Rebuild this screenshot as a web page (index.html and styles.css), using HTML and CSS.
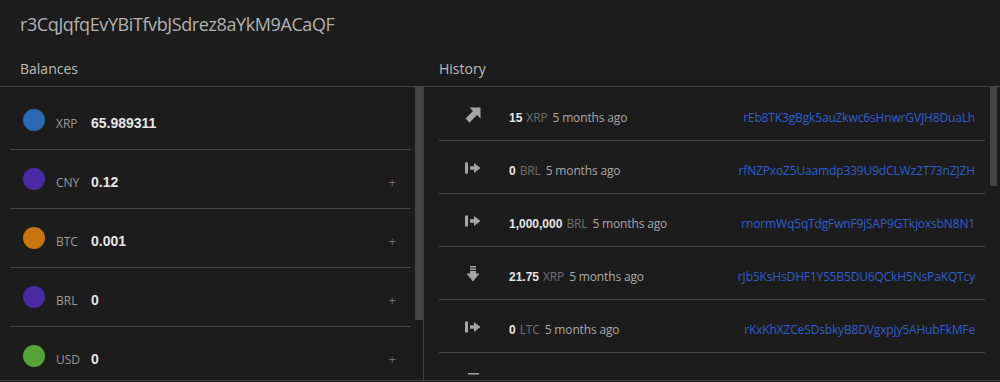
FILE: index.html
```html
<!DOCTYPE html>
<html lang="en">
<head>
  <meta charset="UTF-8" />
  <title>Wallet r3CqJqfqEvYBiTfvbJSdrez8aYkM9ACaQF</title>
  <link rel="stylesheet" href="styles.css">
</head>
<body>

<header class="account">
  <h1>r3CqJqfqEvYBiTfvbJSdrez8aYkM9ACaQF</h1>
</header>

<main class="columns">

  <!-- Balances -->
  <section class="balances">
    <h2 class="panel-title">Balances</h2>
    <div class="panel-body">
      <ul class="balance-list">
        <li class="balance">
          <span class="coin" style="background: #2c68b4"></span>
          <span class="currency">XRP</span>
          <span class="amount">65.989311</span>
        </li>
        <li class="balance">
          <span class="coin" style="background: #4a2aa3"></span>
          <span class="currency">CNY</span>
          <span class="amount">0.12</span>
          <span class="add">+</span>
        </li>
        <li class="balance">
          <span class="coin" style="background: #c6760c"></span>
          <span class="currency">BTC</span>
          <span class="amount">0.001</span>
          <span class="add">+</span>
        </li>
        <li class="balance">
          <span class="coin" style="background: #4a2aa3"></span>
          <span class="currency">BRL</span>
          <span class="amount">0</span>
          <span class="add">+</span>
        </li>
        <li class="balance">
          <span class="coin" style="background: #55a43a"></span>
          <span class="currency">USD</span>
          <span class="amount">0</span>
          <span class="add">+</span>
        </li>
      </ul>
      <div class="scroll-track"><div class="scroll-thumb balances-thumb"></div></div>
    </div>
  </section>

  <!-- History -->
  <section class="history">
    <h2 class="panel-title">History</h2>
    <div class="panel-body">
      <ul class="history-list">
        <li class="tx">
          <svg class="tx-icon" viewBox="0 0 16 16"><path d="M15.5 0.5 V11.5 L12 8 L4.5 15.5 L0.5 11.5 L8 4 L4.5 0.5 Z"/></svg>
          <span class="tx-amount">15</span>
          <span class="tx-currency">XRP</span>
          <span class="tx-time">5 months ago</span>
          <a class="tx-peer" href="#">rEb8TK3gBgk5auZkwc6sHnwrGVJH8DuaLh</a>
        </li>
        <li class="tx">
          <svg class="tx-icon" viewBox="0 0 16 16"><rect x="0" y="2.5" width="3" height="11"/><path d="M5 6.3 H9 V3 L15.5 8 L9 13 V9.7 H5 Z"/></svg>
          <span class="tx-amount">0</span>
          <span class="tx-currency">BRL</span>
          <span class="tx-time">5 months ago</span>
          <a class="tx-peer" href="#">rfNZPxoZ5Uaamdp339U9dCLWz2T73nZJZH</a>
        </li>
        <li class="tx">
          <svg class="tx-icon" viewBox="0 0 16 16"><rect x="0" y="2.5" width="3" height="11"/><path d="M5 6.3 H9 V3 L15.5 8 L9 13 V9.7 H5 Z"/></svg>
          <span class="tx-amount">1,000,000</span>
          <span class="tx-currency">BRL</span>
          <span class="tx-time">5 months ago</span>
          <a class="tx-peer" href="#">rnormWq5qTdgFwnF9jSAP9GTkjoxsbN8N1</a>
        </li>
        <li class="tx">
          <svg class="tx-icon" viewBox="0 0 16 16"><path d="M5 0 H11 V1.6 H5 Z M5 2.5 H11 V4.1 H5 Z M5 5 H11 V7.5 H14.5 L8 15.5 L1.5 7.5 H5 Z"/></svg>
          <span class="tx-amount">21.75</span>
          <span class="tx-currency">XRP</span>
          <span class="tx-time">5 months ago</span>
          <a class="tx-peer" href="#">rJb5KsHsDHF1YS5B5DU6QCkH5NsPaKQTcy</a>
        </li>
        <li class="tx">
          <svg class="tx-icon" viewBox="0 0 16 16"><rect x="0" y="2.5" width="3" height="11"/><path d="M5 6.3 H9 V3 L15.5 8 L9 13 V9.7 H5 Z"/></svg>
          <span class="tx-amount">0</span>
          <span class="tx-currency">LTC</span>
          <span class="tx-time">5 months ago</span>
          <a class="tx-peer" href="#">rKxKhXZCeSDsbkyB8DVgxpjy5AHubFkMFe</a>
        </li>
        <li class="tx">
          <svg class="tx-icon" viewBox="0 0 16 16"><rect x="3" y="1" width="11" height="1.5"/><path d="M8.5 8 L15 13 H11 V16 H6 V13 H2 Z"/></svg>
        </li>
      </ul>
      <div class="scroll-track"><div class="scroll-thumb history-thumb"></div></div>
    </div>
  </section>

</main>

</body>
</html>
```

FILE: styles.css
```css
/* Base */
body {
  margin: 0;
  background: #1c1c1c;
  font-family: "Open Sans", Arial, sans-serif;
  color: #b5b5b5;
  height: 382px;
  overflow: hidden;
}
ul {
  list-style: none;
  margin: 0;
  padding: 0;
}

/* Account header */
.account {
  padding: 11px 20px 0;
  height: 40px;
}
.account h1 {
  margin: 0;
  font-size: 18px;
  font-weight: normal;
  line-height: 26px;
  letter-spacing: -0.4px;
  color: #b2b2b2;
}

/* Columns */
.columns {
  display: flex;
}
.panel-title {
  margin: 0;
  height: 28px;
  padding: 7px 0 0 20px;
  font-size: 14px;
  font-weight: normal;
  line-height: 22px;
  color: #bcbcbc;
}
.panel-body {
  display: flex;
  height: 293px;
  border-top: 1px solid #454545;
  border-bottom: 1px solid #454545;
  overflow: hidden;
}
.scroll-track {
  flex-shrink: 0;
}
.scroll-thumb {
  background: #444;
}

/* Balances */
.balances {
  width: 424px;
}
.balances .panel-body {
  border-right: 1px solid #3e3e3e;
}
.balance-list {
  width: 401px;
  padding: 4px 0 0 10px;
}
.balance {
  display: flex;
  align-items: center;
  height: 58px;
  border-bottom: 1px solid #464646;
}
.coin {
  width: 22px;
  height: 22px;
  border-radius: 50%;
  margin: 0 11px 0 13px;
  flex-shrink: 0;
}
.currency {
  width: 35px;
  padding-top: 6px;
  font-size: 12px;
  color: #9a9a9a;
}
.amount {
  padding-top: 6px;
  font-family: "Liberation Sans", Arial, sans-serif;
  font-weight: bold;
  font-size: 14px;
  color: #e6e6e6;
}
.add {
  margin-left: auto;
  padding: 6px 15px 0 0;
  font-size: 13px;
  color: #6e6e6e;
}
.balances .scroll-track {
  width: 8px;
  margin-left: 4px;
}
.balances-thumb {
  height: 233px;
}

/* History */
.history {
  flex: 1;
}
.history .panel-title {
  padding-left: 15px;
}
.history-list {
  width: 546px;
  margin-left: 15px;
  padding-top: 1px;
}
.tx {
  display: flex;
  align-items: center;
  height: 52px;
  border-bottom: 1px solid #464646;
  font-size: 12px;
  letter-spacing: -0.15px;
}
.tx span,
.tx a {
  padding-top: 7px;
}
.tx-icon {
  width: 16px;
  height: 16px;
  margin: 2px 28px 0 26px;
  fill: #a5a5a5;
  flex-shrink: 0;
}
.tx-amount {
  font-family: "Liberation Sans", Arial, sans-serif;
  font-weight: bold;
  letter-spacing: 0;
  color: #e6e6e6;
}
.tx-currency {
  margin: 0 5px 0 4px;
  color: #6f6f6f;
}
.tx-time {
  color: #a8a8a8;
}
.tx-peer {
  margin-left: auto;
  margin-right: 10px;
  color: #2f5fd0;
  text-decoration: none;
}
.history .scroll-track {
  width: 7px;
  margin-left: 5px;
}
.history-thumb {
  height: 99px;
}
```
